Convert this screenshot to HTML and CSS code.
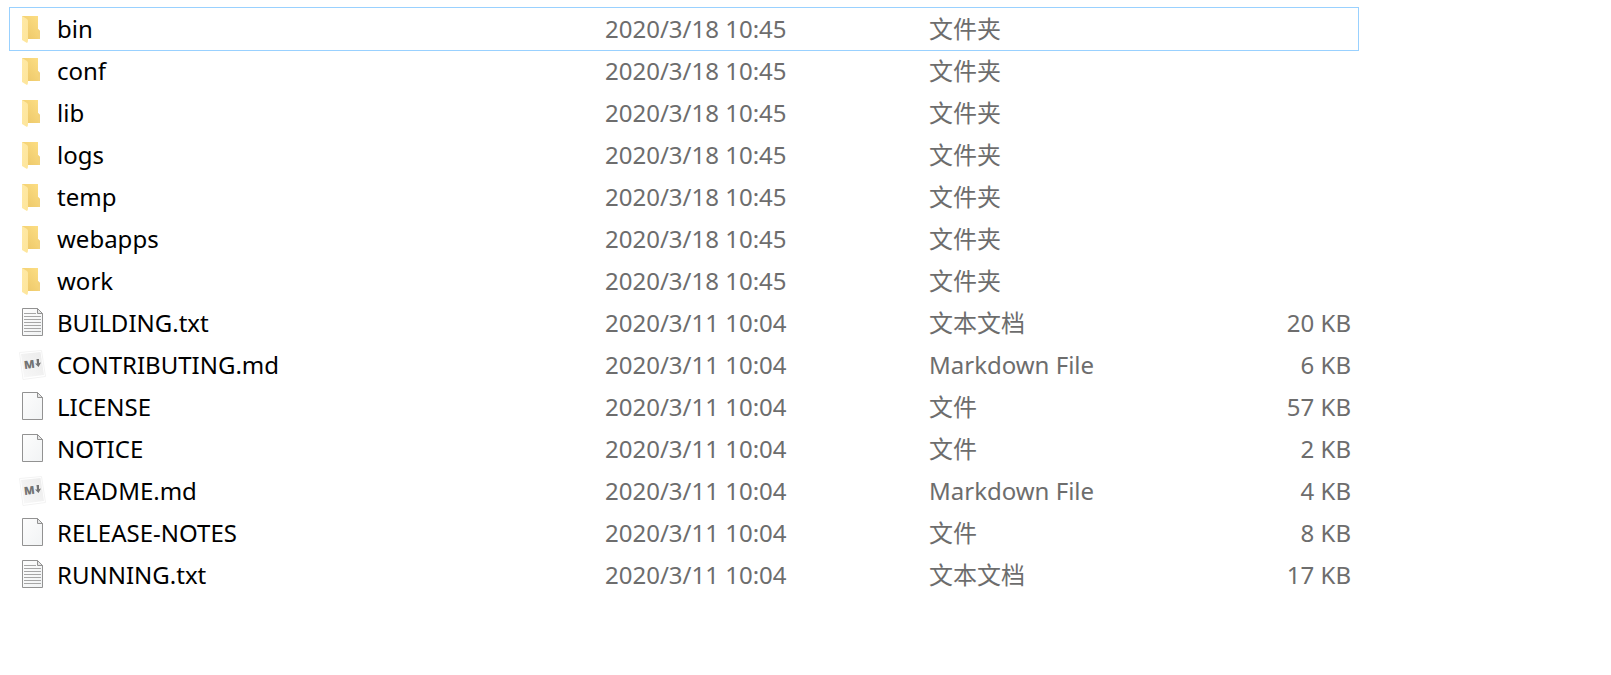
FILE: index.html
```html
<!DOCTYPE html>
<html lang="zh-CN">
  <head>
    <meta charset="UTF-8" />
    <meta name="viewport" content="width=device-width, initial-scale=1.0" />
    <title>Files</title>
    <link rel="stylesheet" href="styles.css">
  </head>
  <body>
    <!-- shared icons -->
    <svg class="sprite" aria-hidden="true">
      <defs>
        <linearGradient id="folder-back" x1="0" y1="1" x2="1" y2="0">
          <stop offset="0" stop-color="#ebc566" />
          <stop offset="1" stop-color="#fddf85" />
        </linearGradient>
        <linearGradient id="folder-front" x1="0" y1="0" x2="1" y2="1">
          <stop offset="0" stop-color="#ffe9a5" />
          <stop offset="1" stop-color="#fde59b" />
        </linearGradient>
        <linearGradient id="paper" x1="0" y1="0" x2="1" y2="1">
          <stop offset="0" stop-color="#fdfdfd" />
          <stop offset="1" stop-color="#f1f3f4" />
        </linearGradient>
        <linearGradient id="md-paper" x1="0" y1="1" x2="1" y2="0">
          <stop offset="0" stop-color="#f8f8f8" />
          <stop offset="1" stop-color="#ebebeb" />
        </linearGradient>
      </defs>
      <symbol id="folder" viewBox="0 0 28 30">
        <path d="M3 2H19V15L21 17V25H3Z" fill="url(#folder-back)" />
        <path d="M19 15L21 17V25H19Z" fill="#f3d27b" />
        <path d="M3 2L8 5Q9 6 9 7V26Q9 29 8 29L3 26Z" fill="url(#folder-front)" />
      </symbol>
      <symbol id="file" viewBox="0 0 28 30">
        <path d="M3.5 .5H18.5L23.5 5.5V27.5H3.5Z" fill="url(#paper)" stroke="#929292" />
        <path d="M18.5 .5V5.5H23.5Z" fill="#e6e6e6" stroke="#929292" />
      </symbol>
      <symbol id="text-file" viewBox="0 0 28 30">
        <use href="#file" width="28" height="30" />
        <path d="M5 5.5H17M5 8.5H22M5 11.5H22M5 14.5H22M5 17.5H22M5 20.5H22M5 23.5H22" stroke="#a6a6a6" />
      </symbol>
      <symbol id="md-page" viewBox="0 0 28 30">
        <path d="M.5 2.5L22.5 .5L26.5 26.5L4 29.5Z" fill="#fff" stroke="#f3f3f3" />
        <path d="M2 4L21.5 2L25 25L5 27.5Z" fill="url(#md-paper)" />
        <path d="M17.5 9H20V13L22 12.5L19.5 17L16 13.5H18Z" fill="#737373" />
      </symbol>
    </svg>

    <table class="files" aria-label="Files">
      <colgroup>
        <col class="col-name" />
        <col class="col-date" />
        <col class="col-type" />
        <col />
      </colgroup>
      <tbody>
        <tr class="focused">
          <td class="name"><div class="entry"><svg class="icon"><use href="#folder" /></svg>bin</div></td>
          <td>2020/3/18 10:45</td>
          <td>文件夹</td>
          <td class="size"></td>
        </tr>
        <tr>
          <td class="name"><div class="entry"><svg class="icon"><use href="#folder" /></svg>conf</div></td>
          <td>2020/3/18 10:45</td>
          <td>文件夹</td>
          <td class="size"></td>
        </tr>
        <tr>
          <td class="name"><div class="entry"><svg class="icon"><use href="#folder" /></svg>lib</div></td>
          <td>2020/3/18 10:45</td>
          <td>文件夹</td>
          <td class="size"></td>
        </tr>
        <tr>
          <td class="name"><div class="entry"><svg class="icon"><use href="#folder" /></svg>logs</div></td>
          <td>2020/3/18 10:45</td>
          <td>文件夹</td>
          <td class="size"></td>
        </tr>
        <tr>
          <td class="name"><div class="entry"><svg class="icon"><use href="#folder" /></svg>temp</div></td>
          <td>2020/3/18 10:45</td>
          <td>文件夹</td>
          <td class="size"></td>
        </tr>
        <tr>
          <td class="name"><div class="entry"><svg class="icon"><use href="#folder" /></svg>webapps</div></td>
          <td>2020/3/18 10:45</td>
          <td>文件夹</td>
          <td class="size"></td>
        </tr>
        <tr>
          <td class="name"><div class="entry"><svg class="icon"><use href="#folder" /></svg>work</div></td>
          <td>2020/3/18 10:45</td>
          <td>文件夹</td>
          <td class="size"></td>
        </tr>
        <tr>
          <td class="name"><div class="entry"><svg class="icon"><use href="#text-file" /></svg>BUILDING.txt</div></td>
          <td>2020/3/11 10:04</td>
          <td>文本文档</td>
          <td class="size">20 KB</td>
        </tr>
        <tr>
          <td class="name"><div class="entry"><svg class="icon"><use href="#md-page" /><text class="md-mark" x="5" y="18" transform="rotate(-7 14 14)">M</text></svg>CONTRIBUTING.md</div></td>
          <td>2020/3/11 10:04</td>
          <td>Markdown File</td>
          <td class="size">6 KB</td>
        </tr>
        <tr>
          <td class="name"><div class="entry"><svg class="icon"><use href="#file" /></svg>LICENSE</div></td>
          <td>2020/3/11 10:04</td>
          <td>文件</td>
          <td class="size">57 KB</td>
        </tr>
        <tr>
          <td class="name"><div class="entry"><svg class="icon"><use href="#file" /></svg>NOTICE</div></td>
          <td>2020/3/11 10:04</td>
          <td>文件</td>
          <td class="size">2 KB</td>
        </tr>
        <tr>
          <td class="name"><div class="entry"><svg class="icon"><use href="#md-page" /><text class="md-mark" x="5" y="18" transform="rotate(-7 14 14)">M</text></svg>README.md</div></td>
          <td>2020/3/11 10:04</td>
          <td>Markdown File</td>
          <td class="size">4 KB</td>
        </tr>
        <tr>
          <td class="name"><div class="entry"><svg class="icon"><use href="#file" /></svg>RELEASE-NOTES</div></td>
          <td>2020/3/11 10:04</td>
          <td>文件</td>
          <td class="size">8 KB</td>
        </tr>
        <tr>
          <td class="name"><div class="entry"><svg class="icon"><use href="#text-file" /></svg>RUNNING.txt</div></td>
          <td>2020/3/11 10:04</td>
          <td>文本文档</td>
          <td class="size">17 KB</td>
        </tr>
      </tbody>
    </table>
  </body>
</html>
```

FILE: styles.css
```css
* {
  margin: 0;
  padding: 0;
  box-sizing: border-box;
}

:root {
  --row-height: 42px;
  --name-color: #000;
  --meta-color: #6d6d6d;
  --focus-color: #99d1ff;
}

body {
  padding: 8px 253px 8px 10px;
  background-color: #fff;
  font-family: "Noto Sans", "Noto Sans CJK SC", sans-serif;
  font-size: 24px;
  line-height: 40px;
}

.sprite {
  position: absolute;
  width: 0;
  height: 0;
}

.files {
  width: 100%;
  table-layout: fixed;
  border-collapse: collapse;
}

.col-name {
  width: 588px;
}

.col-date {
  width: 324px;
}

.col-type {
  width: 240px;
}

.files td {
  height: var(--row-height);
  padding: 0 7px;
  color: var(--meta-color);
  white-space: nowrap;
  vertical-align: middle;
}

.files .name {
  padding-left: 9px;
  color: var(--name-color);
}

.files .size {
  text-align: right;
}

.focused {
  outline: 1px solid var(--focus-color);
}

.entry {
  display: flex;
  align-items: center;
  gap: 10px;
}

.icon {
  flex: none;
  width: 28px;
  height: 30px;
}

.md-mark {
  font-family: "Open Sans", sans-serif;
  font-size: 11px;
  font-weight: 800;
  fill: #737373;
}
```
